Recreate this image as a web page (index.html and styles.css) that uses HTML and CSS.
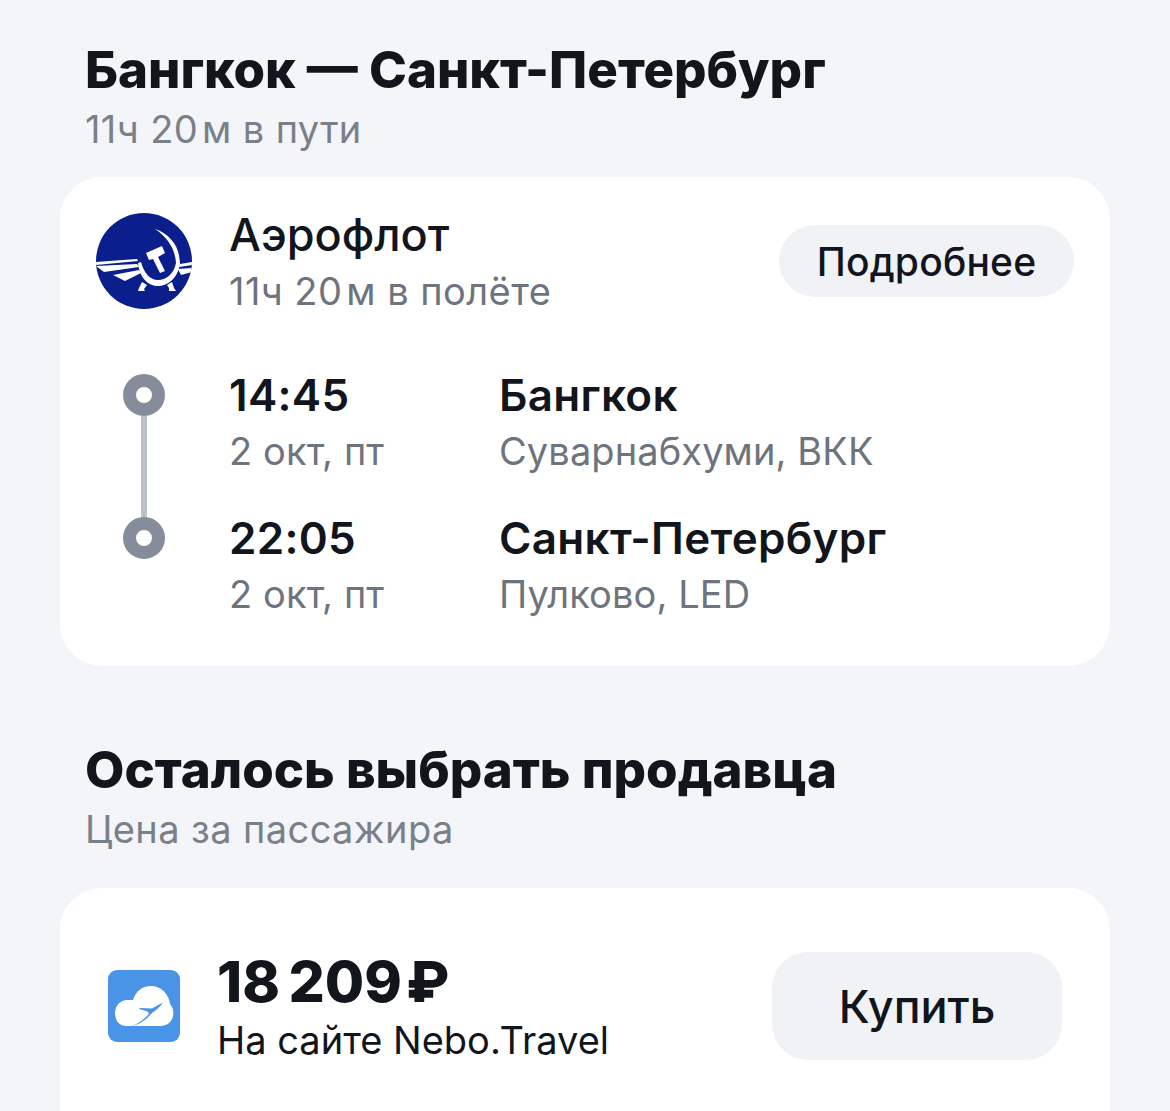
FILE: index.html
```html
<!DOCTYPE html>
<html lang="ru">
<head>
    <meta charset="UTF-8">
    <meta name="viewport" content="width=device-width, initial-scale=1.0">
    <title>Бангкок — Санкт-Петербург</title>
    <link rel="stylesheet" href="styles.css">
</head>
<body>
    <div class="page">
        <div class="section-head">
            <h1>Бангкок — Санкт-Петербург</h1>
            <p>11ч 20&#8202;м в пути</p>
        </div>

        <div class="card flight-card">
            <div class="airline">
                <svg class="airline-logo" viewBox="0 0 96 96">
                    <defs>
                        <clipPath id="logo-clip"><circle cx="48" cy="48" r="48"/></clipPath>
                    </defs>
                    <g clip-path="url(#logo-clip)">
                        <rect width="96" height="96" fill="#0a1f8c"/>
                        <!-- серп -->
                        <path d="M59 16 C72 20 81 31 83 42 L84 50 L80 50 C79 35 71 24 59 16Z" fill="#fff"/>
                        <!-- молот -->
                        <path d="M50 40 L66 33 L69 40 L62 44 L69 58 L64 60 L57 46 L53 47Z" fill="#fff"/>
                        <!-- крылья -->
                        <path d="M0 49 L41 46 L42 48 L0 52Z M0 53 L41 51 L43 54 L8 59Z M17 62 L43 57 L45 60 L29 68Z" fill="#fff"/>
                        <path d="M84 51 L96 49 L96 52 L83 54Z M82 56 L96 55 L96 59 L85 62Z" fill="#fff"/>
                        <!-- дуга и лапы -->
                        <path d="M42 50 L45 49 C48 60 54 67 62 67 C71 67 78 60 80 50 L84 50 C83 63 73 73 62 73 C51 73 43 63 42 50Z" fill="#fff"/>
                        <path d="M46 69 L51 72 L48 76 L49 78 L42 78 L43 75Z M71 72 L76 69 L78 75 L80 78 L73 78 L73 75Z" fill="#fff"/>
                    </g>
                </svg>
                <div class="airline-info">
                    <div class="airline-name">Аэрофлот</div>
                    <div class="muted">11ч 20&#8202;м в полёте</div>
                </div>
                <div class="btn-more">Подробнее</div>
            </div>

            <div class="route">
                <div class="route-row">
                    <div class="route-dot"></div>
                    <div class="route-time">
                        <div class="strong">14:45</div>
                        <div class="muted">2 окт, пт</div>
                    </div>
                    <div class="route-place">
                        <div class="strong">Бангкок</div>
                        <div class="muted">Суварнабхуми, ВКК</div>
                    </div>
                </div>
                <div class="route-row">
                    <div class="route-dot last"></div>
                    <div class="route-time">
                        <div class="strong">22:05</div>
                        <div class="muted">2 окт, пт</div>
                    </div>
                    <div class="route-place">
                        <div class="strong">Санкт-Петербург</div>
                        <div class="muted">Пулково, LED</div>
                    </div>
                </div>
            </div>
        </div>

        <div class="section-head second">
            <h2>Осталось выбрать продавца</h2>
            <p>Цена за пассажира</p>
        </div>

        <div class="card seller-card">
            <svg class="seller-logo" viewBox="0 0 72 72">
                <rect width="72" height="72" rx="9" fill="#4a94e8"/>
                <path d="M18 56 C11 56 7 50 7 43 C7 35 13 29 21 30 L25 30 C28 21 34 16 43 16 C53 16 61 24 62 34 C65 37 66 42 65 46 C64 52 59 56 52 56Z" fill="#fff"/>
                <path d="M23 56 C30 54 35 50 39 46 C42 43 41 42 38 41 L31 39 L32 38 L44 38.500 L52 34 C54 33 55 33 54 34 C51 38 47 41 44 43 C38 50 31 55 23 56Z" fill="#4a94e8"/>
            </svg>
            <div class="seller-info">
                <div class="price">18&#8201;209&#8202;₽</div>
                <div class="seller-name">На сайте Nebo.Travel</div>
            </div>
            <div class="btn-buy">Купить</div>
        </div>
    </div>
</body>
</html>
```

FILE: styles.css
```css
* {
    margin: 0;
    padding: 0;
    box-sizing: border-box;
}

html, body {
    height: 1111px;
    overflow: hidden;
}

body {
    background-color: #f3f5f8;
    font-family: Inter, "Liberation Sans", sans-serif;
    color: #12161c;
}

.page {
    height: 1111px;
    overflow: hidden;
    padding: 40px 60px 0;
}

/* заголовки секций */
.section-head {
    padding-left: 25px;
}

.section-head h1,
.section-head h2 {
    font-size: 51px;
    line-height: 60px;
    font-weight: 800;
}

.section-head p {
    font-size: 38px;
    line-height: 58px;
    letter-spacing: 0.4px;
    color: #7a808a;
}

.section-head.second {
    margin-top: 74px;
}

.card {
    background-color: #fff;
    border-radius: 42px;
}

/* карточка перелёта */
.flight-card {
    margin-top: 19px;
    height: 489px;
    padding: 36px 36px 0;
}

.airline {
    display: flex;
    align-items: center;
    height: 96px;
}

.airline-logo {
    width: 96px;
    height: 96px;
    flex-shrink: 0;
}

.airline-info {
    margin-left: 37px;
    padding-top: 8px;
    flex: 1;
}

.airline-info .muted {
    letter-spacing: 0.45px;
}

.airline-name {
    font-size: 45px;
    line-height: 52px;
    font-weight: 500;
}

.muted {
    font-size: 38px;
    line-height: 60px;
    letter-spacing: 0.1px;
    color: #6e747e;
}

.btn-more {
    width: 295px;
    height: 72px;
    border-radius: 36px;
    background-color: #f0f2f5;
    display: flex;
    align-items: center;
    justify-content: center;
    font-size: 39px;
    letter-spacing: 0.2px;
    font-weight: 500;
}

/* маршрут */
.route {
    margin-top: 60px;
}

.route-row {
    display: flex;
    height: 143px;
}

.route-dot {
    position: relative;
    width: 42px;
    height: 42px;
    margin: 5px 0 0 27px;
    border: 13px solid #848d99;
    border-radius: 50%;
    flex-shrink: 0;
}

.route-dot::after {
    content: "";
    position: absolute;
    left: 5px;
    top: 29px;
    width: 6px;
    height: 101px;
    background-color: #bcc0cb;
}

.route-dot.last::after {
    display: none;
}

.route-time {
    width: 270px;
    margin-left: 64px;
}

.strong {
    font-size: 44px;
    line-height: 52px;
    letter-spacing: 0.3px;
    font-weight: 600;
}

/* карточка продавца */
.seller-card {
    margin-top: 30px;
    height: 300px;
    padding: 64px 48px 0;
    display: flex;
    align-items: flex-start;
}

.seller-logo {
    width: 72px;
    height: 72px;
    margin-top: 18px;
    flex-shrink: 0;
}

.seller-info {
    flex: 1;
    margin-left: 37px;
}

.price {
    font-size: 57px;
    line-height: 60px;
    font-weight: 800;
}

.seller-name {
    font-size: 38px;
    line-height: 56px;
}

.btn-buy {
    width: 290px;
    height: 108px;
    border-radius: 36px;
    background-color: #f0f2f5;
    display: flex;
    align-items: center;
    justify-content: center;
    font-size: 45px;
    font-weight: 500;
}
```
